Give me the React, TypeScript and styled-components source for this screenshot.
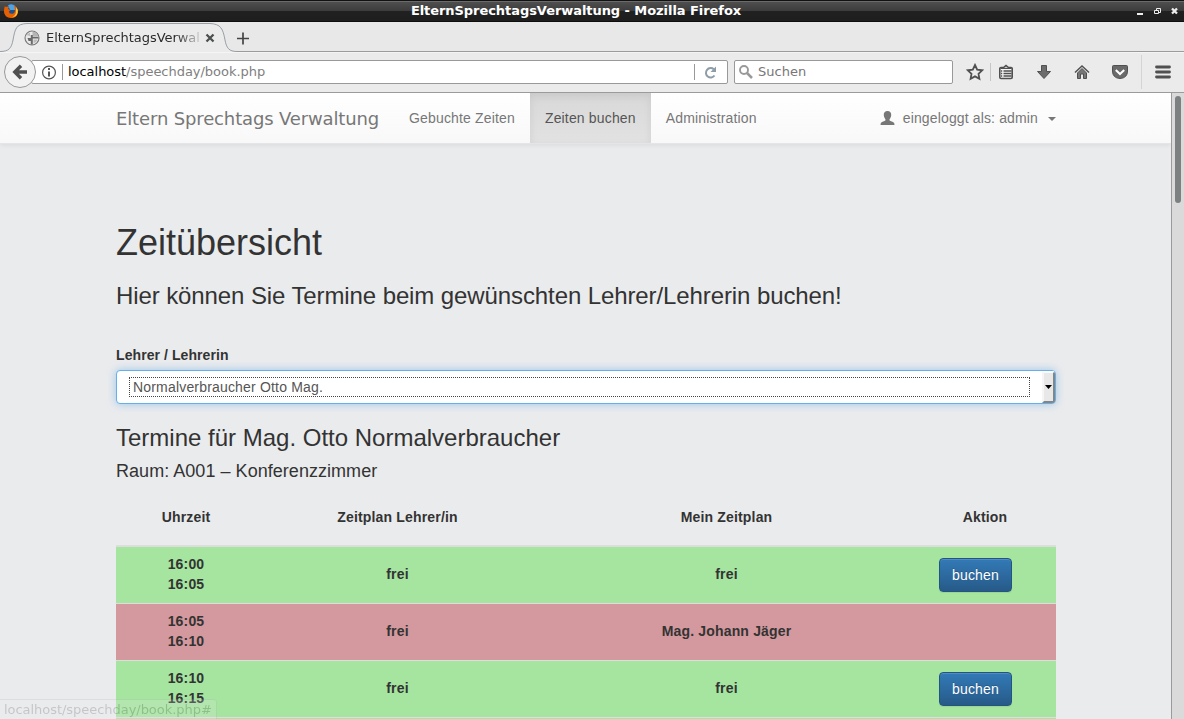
import React from 'react';
import styled, { createGlobalStyle, css } from 'styled-components';

const GlobalStyle = createGlobalStyle`
  * { box-sizing: border-box; }
  html, body { margin: 0; padding: 0; overflow: hidden; }
  svg { display: block; flex: none; }
`;

const uiFont = `"DejaVu Sans", sans-serif`;
const pageFont = `"Liberation Sans", Arial, sans-serif`;

const Window = styled.div`
  position: relative;
  display: flex;
  flex-direction: column;
  width: 1184px;
  height: 719px;
  overflow: hidden;
  background: #ebebeb;
  font: 13px/18px ${uiFont};
  white-space: nowrap;
`;

const TitleBar = styled.header`
  display: grid;
  grid-template-columns: 65px 1fr 95px;
  align-items: center;
  height: 22px;
  flex: none;
  padding: 0 5px 0 3px;
  border-top: 1px solid #111;
  border-bottom: 1px solid #0d0d0d;
  box-shadow: inset 0 1px #6b6b6b;
  background: linear-gradient(#505050 0, #3c3c3c 10px, #212121 10px, #1e1e1e 100%);
`;

const WindowTitle = styled.div`
  color: #fff;
  font-weight: bold;
  font-size: 13px;
  letter-spacing: -0.06px;
  text-align: center;
`;

const WindowButtons = styled.div`
  display: flex;
  justify-content: flex-end;
  gap: 8px;
`;

const TabStrip = styled.div`
  display: flex;
  align-items: flex-end;
  height: 30px;
  flex: none;
  background: #e8e8e8;
  border-bottom: 1px solid #9b9b9b;
`;

const Tab = styled.div`
  position: relative;
  display: flex;
  align-items: center;
  width: 237px;
  height: 30px;
  margin-bottom: -1px;
  padding: 2px 0 0 24px;
  color: #2b2b2b;
`;

const TabShape = styled.svg`
  position: absolute;
  left: 0;
  top: 0;
`;

const TabLabel = styled.span`
  position: relative;
  width: 153px;
  margin: 0 6px 0 6px;
  overflow: hidden;
  letter-spacing: -0.04px;
  mask-image: linear-gradient(90deg, #000 130px, transparent 158px);
`;

const Above = styled.span`
  position: relative;
  display: block;
`;

const NewTab = styled.div`
  padding-bottom: 6px;
`;

const Toolbar = styled.div`
  display: flex;
  align-items: center;
  height: 41px;
  flex: none;
  padding-left: 4px;
  border-bottom: 1px solid #9b9b9b;
  border-top: 1px solid #f5f5f5;
  background: #ebebeb;
`;

const BackButton = styled.div`
  position: relative;
  z-index: 1;
  display: grid;
  place-items: center;
  width: 32px;
  height: 32px;
  margin-top: -1px;
  border: 1px solid #999;
  border-radius: 50%;
  background: #f2f2f2;
`;

const Field = styled.div<{ $width: number; $joined?: boolean }>`
  display: flex;
  align-items: center;
  width: ${p => p.$width}px;
  height: 24px;
  margin-top: -1px;
  background: #fff;
  border: 1px solid #999;
  border-radius: 2px;
  margin-left: ${p => (p.$joined ? -5 : 6)}px;
  padding-left: ${p => (p.$joined ? 10 : 4)}px;
  color: #808080;
`;

const FieldDivider = styled.span`
  width: 1px;
  height: 16px;
  background: #999;
`;

const Address = styled.span`
  flex: 1;
  padding-left: 5px;
  letter-spacing: -0.03px;
  b { color: #000; font-weight: normal; }
`;

const SearchHint = styled.span`
  padding-left: 5px;
  color: #777;
`;

const ToolIcons = styled.div`
  display: flex;
  align-items: center;
  flex: 1;
  margin-top: -1px;
  padding-left: 13px;
`;

const Gap = styled.span<{ $width: number }>`
  width: ${p => p.$width}px;
`;

const ToolDivider = styled.span<{ $tall?: boolean }>`
  width: 1px;
  height: ${p => (p.$tall ? 34 : 18)}px;
  background: ${p => (p.$tall ? '#d4d4d4' : '#c6c6c6')};
`;

const Viewport = styled.div`
  display: flex;
  flex: 1;
  min-height: 0;
`;

const Page = styled.main`
  width: 1171px;
  overflow: hidden;
  background: #eaebed;
  font: 14px/20px ${pageFont};
  color: #333;
`;

const ScrollTrack = styled.div`
  width: 13px;
  padding: 3px 0 0 3px;
  border-left: 1px solid #9b9b9b;
  background: #dadada;
`;

const ScrollThumb = styled.div`
  width: 6px;
  height: 107px;
  border-radius: 3px;
  background: #7c8081;
`;

const NavBar = styled.nav`
  display: flex;
  height: 51px;
  padding: 0 115px 0 116px;
  border-bottom: 1px solid #e3e5e8;
  background: linear-gradient(#fff, #f8f8f8);
  box-shadow: 0 1px 5px rgba(0, 0, 0, 0.075);
  color: #777;
`;

const Brand = styled.div`
  width: 278px;
  font: 18px/20px ${uiFont};
  letter-spacing: -0.14px;
  padding-top: 16px;
`;

const NavItem = styled.div<{ $active?: boolean }>`
  padding: 15px;
  height: 50px;
  letter-spacing: 0.16px;
  ${p => p.$active && css`
    color: #555;
    background: linear-gradient(#d8d8d8, #e2e2e2);
    box-shadow: inset 0 3px 9px rgba(0, 0, 0, 0.075);
  `}
`;

const UserMenu = styled.div`
  display: flex;
  align-items: center;
  height: 50px;
  margin-left: auto;
  letter-spacing: 0.14px;
`;

const Caret = styled.span`
  margin: 2px 0 0 10px;
  border: 4px solid transparent;
  border-top-color: #777;
  border-bottom: 0;
`;

const Content = styled.section`
  width: 940px;
  margin-left: 116px;
`;

const Title = styled.h1`
  margin: 79px 0 0;
  font-size: 36px;
  line-height: 40px;
  font-weight: normal;
`;

const Lead = styled.h3`
  margin: 20px 0 0;
  font-size: 24px;
  line-height: 26px;
  letter-spacing: -0.1px;
  font-weight: normal;
`;

const Label = styled.label`
  display: block;
  margin-top: 36px;
  font-weight: bold;
  letter-spacing: 0.08px;
`;

const Select = styled.div`
  display: flex;
  align-items: center;
  justify-content: space-between;
  height: 34px;
  margin-top: 5px;
  padding-left: 12px;
  border: 1px solid #66afe9;
  border-radius: 4px;
  background: #fff;
  overflow: hidden;
  color: #555;
  box-shadow: 0 0 8px rgba(102, 175, 233, 0.6);
`;

const SelectValue = styled.div`
  width: 901px;
  height: 20px;
  padding-left: 3px;
  line-height: 18px;
  letter-spacing: 0.18px;
  border: 1px dotted #444;
`;

const SelectArrow = styled.div`
  display: grid;
  place-items: center;
  width: 13px;
  height: 32px;
  background: #e8e8e8;
  border: 2px solid;
  border-color: #fafafa #858585 #858585 #f6f6f6;
`;

const Heading = styled.h3`
  margin: 21px 0 0;
  font-size: 24px;
  line-height: 26px;
  font-weight: normal;
`;

const Room = styled.h4`
  margin: 10px 0 0;
  font-size: 18px;
  line-height: 20px;
  letter-spacing: 0.04px;
  font-weight: normal;
`;

const Schedule = styled.div`
  margin-top: 16px;
  font-weight: bold;
  letter-spacing: 0.17px;
  text-align: center;
`;

const Row = styled.div<{ $kind: 'head' | 'free' | 'taken' }>`
  display: grid;
  grid-template-columns: 140px 283px 375px 142px;
  align-items: center;
  height: ${p => (p.$kind === 'head' ? 50 : 57)}px;
  padding-bottom: ${p => (p.$kind === 'head' ? 9 : 2)}px;
  border-bottom: ${p => (p.$kind === 'head' ? 2 : 1)}px solid #ddd;
  background: ${p => ({ head: 'transparent', free: '#a5e5a0', taken: '#d4999e' })[p.$kind]};
`;

const BookButton = styled.button`
  justify-self: start;
  width: 73px;
  height: 34px;
  margin: 1px 0 0 25px;
  padding: 0;
  border: 1px solid #245580;
  border-radius: 4px;
  background: linear-gradient(#337ab7, #265a88);
  box-shadow: inset 0 1px 0 rgba(255, 255, 255, 0.15), 0 1px 1px rgba(0, 0, 0, 0.075);
  color: #fff;
  font: 14px/20px ${pageFont};
  letter-spacing: 0.15px;
  text-shadow: 0 -1px 0 rgba(0, 0, 0, 0.2);
`;

const StatusBar = styled.div`
  position: absolute;
  left: -1px;
  bottom: -1px;
  width: 218px;
  height: 21px;
  padding: 1px 0 0 4px;
  letter-spacing: -0.04px;
  border: 1px solid #aaa;
  border-radius: 0 3px 0 0;
  background: #eee;
  color: #333;
  opacity: 0.2;
`;

const slots = [
  { from: '16:00', to: '16:05', mine: 'frei', free: true },
  { from: '16:05', to: '16:10', mine: 'Mag. Johann Jäger', free: false },
  { from: '16:10', to: '16:15', mine: 'frei', free: true },
];

const NextRow = styled.div`
  height: 10px;
  background: #a5e5a0;
`;

const FirefoxLogo = () => (
  <svg width="16" height="16" viewBox="0 0 16 16">
    <circle cx="8" cy="8" r="6.8" fill="#1c4f8f" />
    <path d="M5 2.2Q9 0 12.4 3L12 7 7 7Z" fill="#4fa3df" />
    <path d="M1.8 3.2 3.2 4Q5 3.2 6 4L5 6 7.5 7 5.8 8.5Q6 11 9 10.8 12 10.4 12 7Q12 4 10.5 2.5Q15.2 4.4 15 9 14.2 15 8 15 1.4 14.5 1 8.5 1 5.4 1.8 3.2Z" fill="#e66000" />
    <path d="M13 4Q15.4 6.5 14.7 9.8 13.2 14.4 8.7 14.5 13 12.5 13 8.5Z" fill="#ffc63b" />
  </svg>
);

const Globe = () => (
  <svg width="16" height="16" viewBox="0 0 16 16">
    <circle cx="8" cy="8" r="7" fill="#e8e8e8" stroke="#777" strokeWidth="1.1" />
    <path d="M8.500 1.500v5.200h5.800Q13.500 2 8.500 1.500Z" fill="#b5b5b5" />
    <path d="M6.800 5h2v9.500h-2ZM3.500 8h4v3h-3ZM8 7h6.500v1.400H8Z" fill="#6a6a6a" />
    <path d="M9.500 9.500h4L12 12 9.500 13.200ZM2.500 5 6 2.500V6Z" fill="#bbb" />
  </svg>
);

export default function App() {
  return (
    <>
      <GlobalStyle />
      <Window>
        <TitleBar>
          <FirefoxLogo />
          <WindowTitle>ElternSprechtagsVerwaltung - Mozilla Firefox</WindowTitle>
          <WindowButtons>
            <svg width="46" height="8" viewBox="0 0 46 8" fill="none" stroke="#eee">
              <path d="M4 7h6" strokeWidth="2" />
              <path d="M23.500 3V1.500h4v4H26M21.500 3.500h4v3h-4Z" />
              <path d="m39 1.500 5 5m0-5-5 5" strokeWidth="2.300" />
            </svg>
          </WindowButtons>
        </TitleBar>

        <TabStrip>
          <Tab>
            <TabShape width="237" height="30" viewBox="0 0 237 30">
              <path d="M0 29.500C9 29.500 11.500 26 13 18 15 7 16 2 27 1.500H210C221 2 223 7 225 18 226.500 26 229 29.500 237 29.500V30H0Z" fill="#ebebeb" />
              <path d="M0 29.500C9 29.500 11.500 26 13 18 15 7 16 2 27 1.500H210C221 2 223 7 225 18 226.500 26 229 29.500 237 29.500" fill="none" stroke="#98a0a5" />
            </TabShape>
            <Above><Globe /></Above>
            <TabLabel>ElternSprechtagsVerwaltung</TabLabel>
            <Above>
              <svg width="10" height="10" viewBox="0 0 10 10" stroke="#4b504f" strokeWidth="2.300">
                <path d="m1.500 1.500 7 7m0-7-7 7" />
              </svg>
            </Above>
          </Tab>
          <NewTab>
            <svg width="12" height="13" viewBox="0 0 12 13" stroke="#444" strokeWidth="1.700">
              <path d="M6 .5v12M0 6.500h12" />
            </svg>
          </NewTab>
        </TabStrip>

        <Toolbar>
          <BackButton>
            <svg width="16" height="16" viewBox="0 0 16 16" fill="none" stroke="#505050" strokeWidth="3.400">
              <path d="M9 1.800 2.800 8 9 14.200M3 8h12" />
            </svg>
          </BackButton>
          <Field $width={697} $joined>
            <svg width="15" height="15" viewBox="0 0 15 15" fill="none" stroke="#555">
              <circle cx="7" cy="7.500" r="6.400" strokeWidth="1.200" />
              <path d="M7 3v2M7 6.500v5" strokeWidth="2" />
            </svg>
            <Gap $width={5} />
            <FieldDivider />
            <Address><b>localhost</b>/speechday/book.php</Address>
            <FieldDivider />
            <Gap $width={9} />
            <svg width="13" height="13" viewBox="0 0 13 13" fill="none" stroke="#8f9ba5" strokeWidth="2">
              <path d="M10.500 9.500A4.700 4.700 0 1 1 9.800 3.300" />
              <path d="M12 .5V6H6.500Z" fill="#8f9ba5" stroke="none" />
            </svg>
            <Gap $width={10} />
          </Field>
          <Field $width={219}>
            <svg width="14" height="14" viewBox="0 0 14 14" fill="none" stroke="#999">
              <circle cx="5" cy="5" r="4" strokeWidth="1.900" />
              <path d="m8 8 5 5" strokeWidth="2.500" />
            </svg>
            <SearchHint>Suchen</SearchHint>
          </Field>
          <ToolIcons>
            <svg width="18" height="18" viewBox="0 0 18 18" fill="none" stroke="#505050" strokeWidth="1.800">
              <path d="m9 2 2.200 4.700 5 .6-3.700 3.500.9 5L9 13.400 4.600 15.800l.9-5L1.800 7.300l5-.6Z" />
            </svg>
            <Gap $width={6} />
            <ToolDivider />
            <Gap $width={8} />
            <svg width="15" height="16" viewBox="0 0 15 16">
              <path d="M.8 4.500Q.8 3.500 2 3.500h2.500L7 1.500l2.500 2H12q1.200 0 1.200 1v8.800q0 1.200-1.200 1.200H2Q.8 14.500.8 13.300Z" fill="#f5f5f5" stroke="#505050" strokeWidth="1.600" />
              <path d="M1.500 4.300h11M4.500 7h8M4.500 9.500h8M4.500 12h8M2 7h1.200M2 9.500h1.200M2 12h1.200" stroke="#505050" strokeWidth="1.300" />
            </svg>
            <Gap $width={22} />
            <svg width="16" height="16" viewBox="0 0 16 16">
              <path d="M5.500 1.500h5v6H14.500L8 14.500 1.500 7.500h4Z" fill="#6c6c6c" stroke="#505050" />
            </svg>
            <Gap $width={22} />
            <svg width="16" height="16" viewBox="0 0 16 16">
              <path d="m1 8.500 7-6.500 7 6.500" fill="none" stroke="#505050" strokeWidth="1.500" />
              <path d="M8 4.500 3.500 9v5.500h3V10h3v4.500h3V9Z" fill="#777" stroke="#505050" />
            </svg>
            <Gap $width={22} />
            <svg width="17" height="16" viewBox="0 0 17 16">
              <path d="M1.500 1.500h13q1 0 1 1v4.500q0 7-7.500 7.500Q.5 14 .5 7V2.500q0-1 1-1Z" fill="#6a6a6a" stroke="#505050" />
              <path d="m3.800 6 4.200 4 4.200-4" fill="none" stroke="#fff" strokeWidth="2" />
            </svg>
            <Gap $width={12} />
            <ToolDivider $tall />
            <Gap $width={13} />
            <svg width="16" height="14" viewBox="0 0 16 14" stroke="#505050" strokeWidth="2.800" strokeLinecap="round">
              <path d="M1.500 2h13M1.500 7h13M1.500 12h13" />
            </svg>
          </ToolIcons>
        </Toolbar>

        <Viewport>
          <Page>
            <NavBar>
              <Brand>Eltern Sprechtags Verwaltung</Brand>
              <NavItem>Gebuchte Zeiten</NavItem>
              <NavItem $active>Zeiten buchen</NavItem>
              <NavItem>Administration</NavItem>
              <UserMenu>
                <svg width="15" height="15" viewBox="0 0 15 15">
                  <path d="M7.500 0C10 0 11.500 1.700 11.200 4.500 11 6.500 10 7.300 9.500 8.500c-.3 1 .4 1.500 3.500 2.500Q14.600 11.700 14.500 14H.5Q.4 11.700 2 11C5.100 10 5.800 9.500 5.500 8.500 5 7.300 4 6.500 3.800 4.500 3.500 1.700 5 0 7.500 0Z" fill="#777" />
                </svg>
                <Gap $width={8} />
                eingeloggt als: admin
                <Caret />
              </UserMenu>
            </NavBar>

            <Content>
              <Title>Zeitübersicht</Title>
              <Lead>Hier können Sie Termine beim gewünschten Lehrer/Lehrerin buchen!</Lead>
              <Label>Lehrer / Lehrerin</Label>
              <Select>
                <SelectValue>Normalverbraucher Otto Mag.</SelectValue>
                <SelectArrow>
                  <svg width="7" height="4" viewBox="0 0 7 4"><path d="M0 0h7L3.500 4Z" /></svg>
                </SelectArrow>
              </Select>
              <Heading>Termine für Mag. Otto Normalverbraucher</Heading>
              <Room>Raum: A001 – Konferenzzimmer</Room>
              <Schedule>
                <Row $kind="head">
                  <span>Uhrzeit</span>
                  <span>Zeitplan Lehrer/in</span>
                  <span>Mein Zeitplan</span>
                  <span>Aktion</span>
                </Row>
                {slots.map(s => (
                  <Row key={s.from} $kind={s.free ? 'free' : 'taken'}>
                    <span>{s.from}<br />{s.to}</span>
                    <span>frei</span>
                    <span>{s.mine}</span>
                    {s.free && <BookButton>buchen</BookButton>}
                  </Row>
                ))}
                <NextRow />
              </Schedule>
            </Content>
          </Page>
          <ScrollTrack><ScrollThumb /></ScrollTrack>
        </Viewport>
        <StatusBar>localhost/speechday/book.php#</StatusBar>
      </Window>
    </>
  );
}
